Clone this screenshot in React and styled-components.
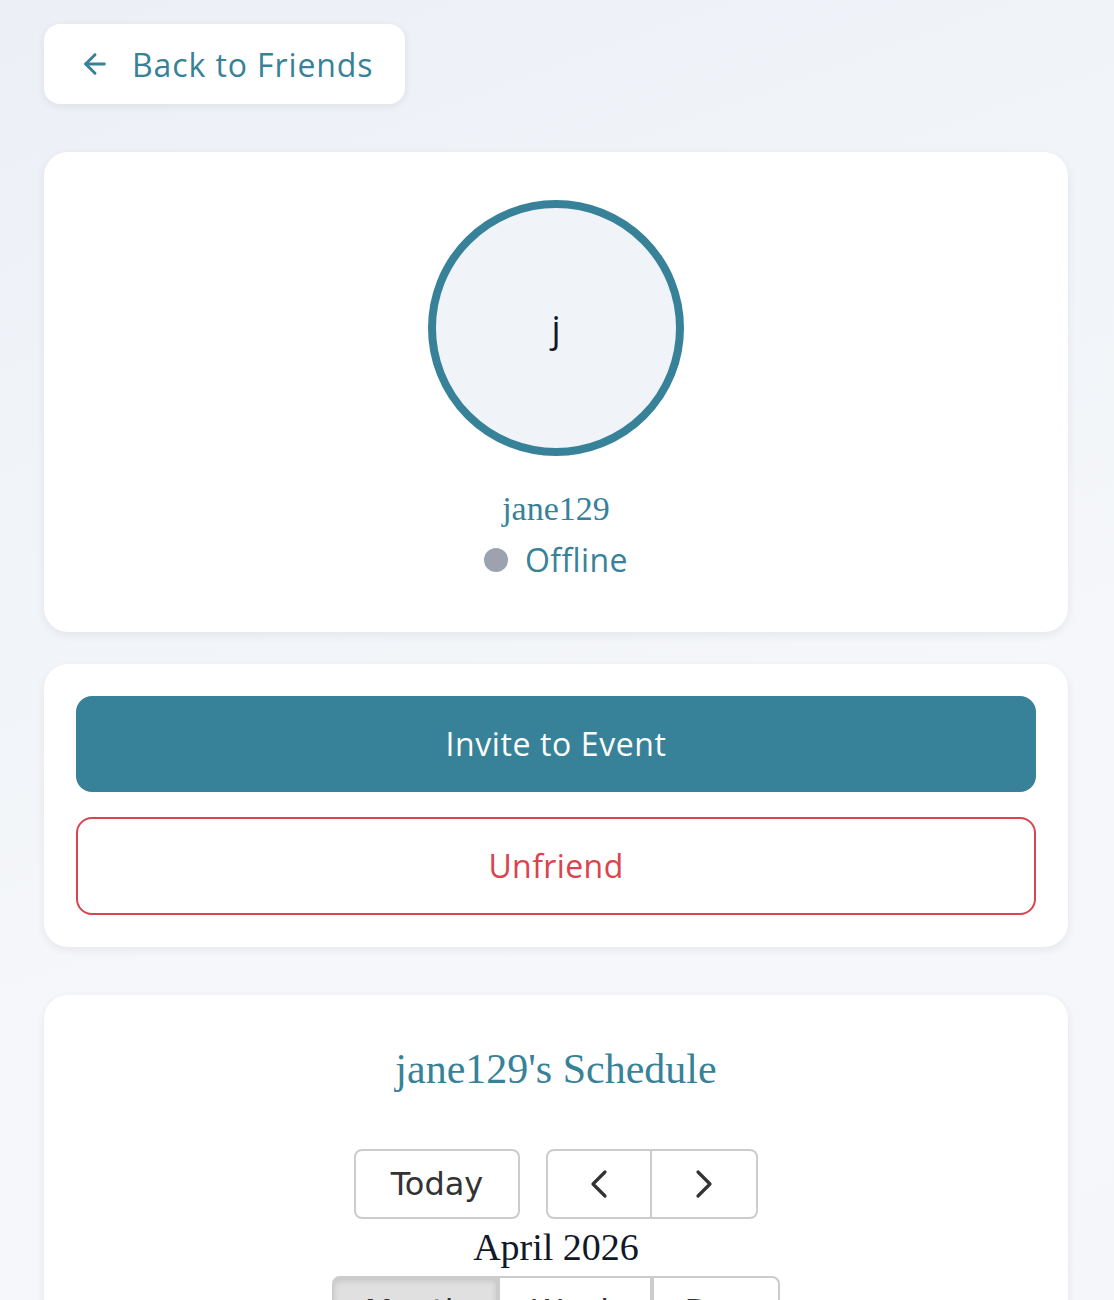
import React from "react";
import styled, { createGlobalStyle } from "styled-components";
import { ArrowLeft, ChevronLeft, ChevronRight } from "lucide-react";

const TEAL = "#388299";
const RED = "#d9444d";
const SANS = `"Open Sans", "Liberation Sans", sans-serif`;
const SERIF = `"Liberation Serif", "DejaVu Serif", serif`;

const Global = createGlobalStyle`
  html, body { margin: 0; padding: 0; }
  body {
    min-height: 1300px;
    background: linear-gradient(160deg, #ecf0f6 0%, #f5f7fa 45%, #f4f6fa 100%);
    font-family: ${SANS};
  }
  * { box-sizing: border-box; }
`;

const Page = styled.div`
  width: 1024px;
  margin: 0 0 0 44px;
  padding: 24px 0 48px;
  display: flex;
  flex-direction: column;
  align-items: stretch;
`;

const BackButton = styled.button`
  align-self: flex-start;
  display: flex;
  align-items: center;
  gap: 21px;
  height: 80px;
  padding: 0 32px 0 35px;
  border: none;
  border-radius: 16px;
  background: #fff;
  box-shadow: 0 2px 8px rgba(15, 23, 42, 0.08);
  color: ${TEAL};
  font-family: ${SANS};
  font-size: 32px;
  letter-spacing: 0.9px;
  cursor: pointer;
  margin-bottom: 48px;
`;

const Card = styled.section`
  background: #fff;
  border-radius: 24px;
  box-shadow: 0 3px 10px rgba(15, 23, 42, 0.07);
  padding: ${(p) => p.$pad || "32px"};
  margin-bottom: ${(p) => p.$mb || "32px"};
  display: flex;
  flex-direction: column;
  align-items: ${(p) => (p.$center ? "center" : "stretch")};
`;

const Avatar = styled.div`
  width: 256px;
  height: 256px;
  border-radius: 50%;
  border: 8px solid ${TEAL};
  background: #f0f4f9;
  display: flex;
  align-items: center;
  justify-content: center;
  color: #111827;
  font-family: ${SANS};
  font-size: 36px;
  margin-bottom: 32px;
`;

const Username = styled.div`
  font-family: ${SERIF};
  font-size: 34px;
  line-height: 42px;
  color: ${TEAL};
  margin-bottom: 6px;
`;

const Status = styled.div`
  display: flex;
  align-items: center;
  gap: 17px;
  font-size: 32px;
  line-height: 48px;
  letter-spacing: 0.4px;
  color: ${TEAL};
`;

const Dot = styled.span`
  width: 24px;
  height: 24px;
  border-radius: 50%;
  background: #9ca3af;
`;

const ActionButton = styled.button`
  width: 100%;
  border-radius: 16px;
  font-family: ${SANS};
  font-size: 32px;
  line-height: 48px;
  letter-spacing: ${(p) => (p.$danger ? "0.4px" : "0.6px")};
  cursor: pointer;
  background: ${(p) => (p.$danger ? "#fff" : TEAL)};
  color: ${(p) => (p.$danger ? RED : "#fff")};
  border: ${(p) => (p.$danger ? `2px solid ${RED}` : "none")};
  padding: ${(p) => (p.$danger ? "23px" : "24px")};
  & + & { margin-top: 25px; }
`;

const ScheduleTitle = styled.h2`
  margin: 0 0 54px;
  font-family: ${SERIF};
  font-weight: normal;
  font-size: 42px;
  line-height: 52px;
  color: ${TEAL};
  text-align: center;
`;

const Toolbar = styled.div`
  display: flex;
  flex-direction: column;
  align-items: center;
`;

const ToolbarChunk = styled.div`
  display: flex;
  align-items: center;
  gap: 26px;
`;

const Group = styled.div`
  display: flex;
`;

const CalButton = styled.button`
  height: 70px;
  width: ${(p) => p.$w || "auto"};
  padding: 0 16px;
  display: flex;
  align-items: center;
  justify-content: center;
  font-family: "DejaVu Sans", ${SANS};
  font-size: 32px;
  color: #333;
  background: ${(p) => (p.$active ? "#e0e0e0" : "#fff")};
  box-shadow: ${(p) => (p.$active ? "inset 0 3px 6px rgba(0,0,0,0.12)" : "none")};
  border: 2px solid #cccccc;
  border-radius: 8px;
  cursor: pointer;
  ${Group} > & { border-radius: 0; }
  ${Group} > & + & { border-left-width: 0; }
  ${Group} > &:first-child { border-radius: 8px 0 0 8px; }
  ${Group} > &:last-child { border-radius: 0 8px 8px 0; }
`;

const MonthTitle = styled.div`
  font-family: ${SERIF};
  font-size: 38px;
  line-height: 57px;
  color: #111827;
`;

const CalGrid = styled.div`
  margin-top: 32px;
  width: 100%;
  height: 400px;
  border: 1px solid #ddd;
`;

export default function App() {
  return (
    <>
      <Global />
      <Page>
        <BackButton>
          <ArrowLeft size={32} strokeWidth={2.2} />
          Back to Friends
        </BackButton>

        <Card $center $pad="48px 32px 48px">
          <Avatar>j</Avatar>
          <Username>jane129</Username>
          <Status>
            <Dot />
            Offline
          </Status>
        </Card>

        <Card $mb="48px" $pad="32px">
          <ActionButton>Invite to Event</ActionButton>
          <ActionButton $danger>Unfriend</ActionButton>
        </Card>

        <Card $pad="48px 32px 48px">
          <ScheduleTitle>jane129's Schedule</ScheduleTitle>
          <Toolbar>
            <ToolbarChunk>
              <CalButton $w="166px">Today</CalButton>
              <Group>
                <CalButton $w="106px" aria-label="prev">
                  <ChevronLeft size={48} strokeWidth={1.6} />
                </CalButton>
                <CalButton $w="106px" aria-label="next">
                  <ChevronRight size={48} strokeWidth={1.6} />
                </CalButton>
              </Group>
            </ToolbarChunk>
            <MonthTitle>April 2026</MonthTitle>
            <Group>
              <CalButton $w="166px" $active>Month</CalButton>
              <CalButton $w="154px">Week</CalButton>
              <CalButton $w="128px">Day</CalButton>
            </Group>
          </Toolbar>
          <CalGrid />
        </Card>
      </Page>
    </>
  );
}
